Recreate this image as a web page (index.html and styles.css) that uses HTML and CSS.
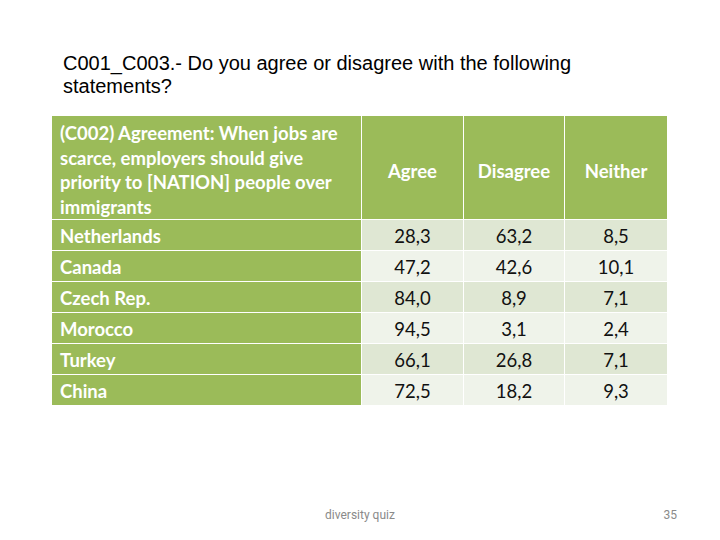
FILE: index.html
```html
<!DOCTYPE html>
<html>
<head>
<meta charset="utf-8">
<link rel="stylesheet" href="styles.css">
</head>
<body>
<div class="slide">
  <h1 class="title">C001_C003.- Do you agree or disagree with the following statements?</h1>
  <div class="table">
    <div class="row head">
      <div class="cell label">(C002) Agreement: When jobs are scarce, employers should give priority to [NATION] people over immigrants</div>
      <div class="cell colhead">Agree</div>
      <div class="cell colhead">Disagree</div>
      <div class="cell colhead">Neither</div>
    </div>
    <div class="row band1">
      <div class="cell name">Netherlands</div><div class="cell num">28,3</div><div class="cell num">63,2</div><div class="cell num">8,5</div>
    </div>
    <div class="row band2">
      <div class="cell name">Canada</div><div class="cell num">47,2</div><div class="cell num">42,6</div><div class="cell num">10,1</div>
    </div>
    <div class="row band1">
      <div class="cell name">Czech Rep.</div><div class="cell num">84,0</div><div class="cell num">8,9</div><div class="cell num">7,1</div>
    </div>
    <div class="row band2">
      <div class="cell name">Morocco</div><div class="cell num">94,5</div><div class="cell num">3,1</div><div class="cell num">2,4</div>
    </div>
    <div class="row band1">
      <div class="cell name">Turkey</div><div class="cell num">66,1</div><div class="cell num">26,8</div><div class="cell num">7,1</div>
    </div>
    <div class="row band2">
      <div class="cell name">China</div><div class="cell num">72,5</div><div class="cell num">18,2</div><div class="cell num">9,3</div>
    </div>
  </div>
  <div class="footer">
    <span class="foot-title">diversity quiz</span>
    <span class="page">35</span>
  </div>
</div>
</body>
</html>
```
FILE: styles.css
```css
html, body {
  margin: 0;
  padding: 0;
  background: #ffffff;
}
.slide {
  position: relative;
  width: 720px;
  height: 540px;
  overflow: hidden;
  display: flex;
  flex-direction: column;
}
.title {
  margin: 0;
  padding: 52px 0 0 63px;
  width: 580px;
  font-family: "Liberation Sans", Arial, sans-serif;
  font-weight: normal;
  font-size: 20px;
  line-height: 23px;
  color: #000000;
  height: 64px;
}
.table {
  margin-left: 52px;
  width: 615px;
  display: flex;
  flex-direction: column;
  gap: 1px;
  font-family: Lato, "Open Sans", sans-serif;
  font-size: 18.5px;
}
.row {
  display: grid;
  grid-template-columns: 309px 101px 100px 102px;
  column-gap: 1px;
  height: 30px;
}
.head {
  height: 101px;
  margin-bottom: 2px;
}
.cell {
  display: flex;
  align-items: center;
}
.head .cell {
  background: #9bbb59;
  color: #ffffff;
  font-weight: bold;
}
.label {
  padding: 5px 8px 0;
  line-height: 24.5px;
}
.colhead {
  justify-content: center;
  padding-top: 6px;
}
.name {
  background: #9bbb59;
  color: #ffffff;
  font-weight: bold;
  padding: 2px 8px 0;
}
.num {
  justify-content: center;
  color: #111111;
  padding-top: 2px;
}
.band1 .num {
  background: #dfe7d3;
}
.band2 .num {
  background: #eff3ea;
}
.footer {
  position: absolute;
  left: 0;
  right: 0;
  top: 508px;
  height: 16px;
  font-family: Roboto, "Open Sans", sans-serif;
  font-size: 12px;
  color: #8a8a8a;
}
.foot-title {
  position: absolute;
  left: 0;
  right: 0;
  text-align: center;
}
.page {
  position: absolute;
  right: 43px;
}
```
